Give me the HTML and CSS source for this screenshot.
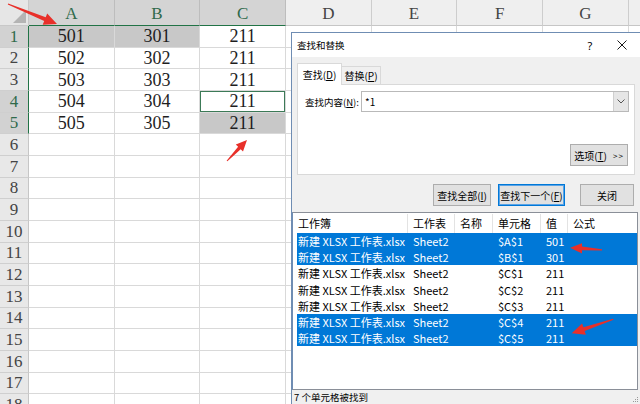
FILE: index.html
```html
<!DOCTYPE html>
<html lang="zh">
<head>
<meta charset="utf-8">
<title>查找和替换</title>
<link rel="stylesheet" href="styles.css">
</head>
<body>
<div class="sheet">
  <div class="corner"></div><div class="ch sel">A</div><div class="ch sel">B</div><div class="ch sel">C</div><div class="ch">D</div><div class="ch">E</div><div class="ch">F</div><div class="ch">G</div><div class="ch"></div>
  <div class="rh sel g">1</div><div class="c hl">501</div><div class="c hl">301</div><div class="c">211</div><div class="c"></div><div class="c"></div><div class="c"></div><div class="c"></div><div class="c"></div>
  <div class="rh g">2</div><div class="c">502</div><div class="c">302</div><div class="c">211</div><div class="c"></div><div class="c"></div><div class="c"></div><div class="c"></div><div class="c"></div>
  <div class="rh g">3</div><div class="c">503</div><div class="c">303</div><div class="c">211</div><div class="c"></div><div class="c"></div><div class="c"></div><div class="c"></div><div class="c"></div>
  <div class="rh sel g">4</div><div class="c">504</div><div class="c">304</div><div class="c active">211</div><div class="c"></div><div class="c"></div><div class="c"></div><div class="c"></div><div class="c"></div>
  <div class="rh sel g">5</div><div class="c">505</div><div class="c">305</div><div class="c hl">211</div><div class="c"></div><div class="c"></div><div class="c"></div><div class="c"></div><div class="c"></div>
  <div class="rh">6</div><div class="c"></div><div class="c"></div><div class="c"></div><div class="c"></div><div class="c"></div><div class="c"></div><div class="c"></div><div class="c"></div>
  <div class="rh">7</div><div class="c"></div><div class="c"></div><div class="c"></div><div class="c"></div><div class="c"></div><div class="c"></div><div class="c"></div><div class="c"></div>
  <div class="rh">8</div><div class="c"></div><div class="c"></div><div class="c"></div><div class="c"></div><div class="c"></div><div class="c"></div><div class="c"></div><div class="c"></div>
  <div class="rh">9</div><div class="c"></div><div class="c"></div><div class="c"></div><div class="c"></div><div class="c"></div><div class="c"></div><div class="c"></div><div class="c"></div>
  <div class="rh">10</div><div class="c"></div><div class="c"></div><div class="c"></div><div class="c"></div><div class="c"></div><div class="c"></div><div class="c"></div><div class="c"></div>
  <div class="rh">11</div><div class="c"></div><div class="c"></div><div class="c"></div><div class="c"></div><div class="c"></div><div class="c"></div><div class="c"></div><div class="c"></div>
  <div class="rh">12</div><div class="c"></div><div class="c"></div><div class="c"></div><div class="c"></div><div class="c"></div><div class="c"></div><div class="c"></div><div class="c"></div>
  <div class="rh">13</div><div class="c"></div><div class="c"></div><div class="c"></div><div class="c"></div><div class="c"></div><div class="c"></div><div class="c"></div><div class="c"></div>
  <div class="rh">14</div><div class="c"></div><div class="c"></div><div class="c"></div><div class="c"></div><div class="c"></div><div class="c"></div><div class="c"></div><div class="c"></div>
  <div class="rh">15</div><div class="c"></div><div class="c"></div><div class="c"></div><div class="c"></div><div class="c"></div><div class="c"></div><div class="c"></div><div class="c"></div>
  <div class="rh">16</div><div class="c"></div><div class="c"></div><div class="c"></div><div class="c"></div><div class="c"></div><div class="c"></div><div class="c"></div><div class="c"></div>
  <div class="rh">17</div><div class="c"></div><div class="c"></div><div class="c"></div><div class="c"></div><div class="c"></div><div class="c"></div><div class="c"></div><div class="c"></div>
  <div class="rh">18</div><div class="c"></div><div class="c"></div><div class="c"></div><div class="c"></div><div class="c"></div><div class="c"></div><div class="c"></div><div class="c"></div>
</div>

<div class="dialog">
  <div class="titlebar">
    <span class="title">查找和替换</span>
    <span class="tb-btn help">?</span>
    <span class="tb-btn close"><svg width="10" height="10" viewBox="0 0 10 10"><path d="M0.5 0.5L9.5 9.5M9.5 0.5L0.5 9.5" stroke="#1a1a1a" stroke-width="1" fill="none"/></svg></span>
  </div>
  <div class="tabs">
    <div class="tab active">查找(<u>D</u>)</div>
    <div class="tab">替换(<u>P</u>)</div>
  </div>
  <div class="panel">
    <div class="findrow">
      <span class="label">查找内容(<u>N</u>):</span>
      <div class="input">
        <span class="value">*1</span>
        <span class="drop"><svg width="8" height="5" viewBox="0 0 8 5"><path d="M0.5 0.5L4 4L7.5 0.5" stroke="#555" stroke-width="1" fill="none"/></svg></span>
      </div>
    </div>
    <div class="optrow">
      <div class="btn opt">选项(<u>T</u>)<span class="gt">&gt;&gt;</span></div>
    </div>
  </div>
  <div class="btnrow">
    <div class="btn w58">查找全部(<u>I</u>)</div>
    <div class="btn w67 focus">查找下一个(<u>F</u>)</div>
    <div class="btn w54">关闭</div>
  </div>
  <div class="list">
    <div class="lhead">
      <span>工作簿</span><span>工作表</span><span>名称</span><span>单元格</span><span>值</span><span class="last">公式</span>
    </div>
    <div class="lrow sel"><span>新建 XLSX 工作表.xlsx</span><span>Sheet2</span><span></span><span>$A$1</span><span>501</span><span></span></div>
    <div class="lrow sel"><span>新建 XLSX 工作表.xlsx</span><span>Sheet2</span><span></span><span>$B$1</span><span>301</span><span></span></div>
    <div class="lrow"><span>新建 XLSX 工作表.xlsx</span><span>Sheet2</span><span></span><span>$C$1</span><span>211</span><span></span></div>
    <div class="lrow"><span>新建 XLSX 工作表.xlsx</span><span>Sheet2</span><span></span><span>$C$2</span><span>211</span><span></span></div>
    <div class="lrow"><span>新建 XLSX 工作表.xlsx</span><span>Sheet2</span><span></span><span>$C$3</span><span>211</span><span></span></div>
    <div class="lrow sel"><span>新建 XLSX 工作表.xlsx</span><span>Sheet2</span><span></span><span>$C$4</span><span>211</span><span></span></div>
    <div class="lrow sel"><span>新建 XLSX 工作表.xlsx</span><span>Sheet2</span><span></span><span>$C$5</span><span>211</span><span></span></div>
  </div>
  <div class="status">
    <span>7 个单元格被找到</span>
    <svg class="grip" width="6" height="6" viewBox="0 0 6 6"><rect x="4" y="0" width="1" height="1" fill="#999"/><rect x="2" y="2" width="1" height="1" fill="#999"/><rect x="4" y="2" width="1" height="1" fill="#999"/><rect x="0" y="4" width="1" height="1" fill="#999"/><rect x="2" y="4" width="1" height="1" fill="#999"/><rect x="4" y="4" width="1" height="1" fill="#999"/></svg>
  </div>
</div>

<svg class="arrows" width="640" height="404" viewBox="0 0 640 404">
  <polygon points="8.2,3.5 45.7,17.2 47.2,13.5 57,24 42.7,24.7 44.2,20.9 7.8,4.5"/>
  <polygon points="226.6,160.7 238.1,146.8 235.8,144.5 247,140 243,151.4 240.7,149.2 227.4,161.3"/>
  <polygon points="602,249.3 582,246.6 582,243.2 570,247.8 582,253.4 582,250.2 602,250.6"/>
  <polygon points="613.1,318.8 583.4,327.3 582.1,323.5 571.7,333.3 585.9,334.8 584.6,331 613.5,319.8"/>
</svg>
</body>
</html>
```

FILE: styles.css
```css
* { box-sizing: border-box; margin: 0; padding: 0; }
html, body { width: 640px; height: 404px; overflow: hidden; background: #fff; }
body { position: relative; font-family: "Liberation Serif", serif; }

/* ---------- spreadsheet ---------- */
.sheet {
  display: grid;
  grid-template-columns: 29px repeat(8, 85.67px);
  grid-template-rows: 26px;
  grid-auto-rows: 21.67px;
  width: max-content;
}
.sheet > div {
  border-right: 1px solid #d9d9d9;
  border-bottom: 1px solid #d9d9d9;
  display: flex;
  align-items: center;
  justify-content: center;
  font-size: 18px;
  line-height: 1;
  color: #1e1e1e;
}
.sheet > .corner { background: #e6e6e6; position: relative; border-color: #c8c8c8; }
.corner::after {
  content: "";
  position: absolute;
  right: 2px; bottom: 2px;
  width: 13px; height: 13px;
  background: #b4b4b4;
  clip-path: polygon(100% 0, 100% 100%, 0 100%);
}
.sheet > .ch {
  background: #efefef;
  color: #444;
  font-size: 17px;
  padding-top: 2px;
  border-right-color: #cdcdcd;
  border-bottom-color: #c6c6c6;
}
.sheet > .ch.sel { background: #d4d4d4; color: #2f6a4b; border-bottom: 1px solid #217346; border-right-color: #bdbdbd; }
.sheet > .rh {
  background: #e8e8e8;
  color: #444;
  font-size: 17px;
  border-right-color: #c6c6c6;
  border-bottom-color: #cfcfcf;
}
.sheet > .rh.sel { background: #d2d2d2; color: #2f6a4b; }
.sheet > .rh.g { border-right: 1px solid #217346; }
.sheet > .c.hl { background: #c8c8c8; }
.sheet > .c.active { box-shadow: inset 0 0 0 1px #3c7a57; }

/* ---------- dialog ---------- */
.dialog {
  position: absolute;
  left: 291px; top: 32px;
  width: 350px; height: 380px;
  background: #f0f0f0;
  border-left: 1px solid #6f8db3;
  border-top: 1px solid #6f8db3;
  display: flex;
  flex-direction: column;
  font-family: "Noto Sans CJK SC", "Microsoft YaHei", sans-serif;
  color: #000;
  z-index: 2;
}
.titlebar {
  height: 24px;
  background: #fff;
  display: flex;
  align-items: center;
  padding: 0 3px 0 5px;
  flex: none;
}
.title { font-size: 9.5px; flex: 1; }
.tb-btn { width: 32px; height: 24px; display: flex; align-items: center; justify-content: center; }
.help { font-size: 11px; font-family: "Noto Sans", sans-serif; }

.tabs {
  display: flex;
  align-items: flex-end;
  height: 21px;
  margin: 6px 0 0 5px;
  position: relative;
  z-index: 1;
  flex: none;
}
.tab {
  font-size: 10px;
  height: 18px;
  width: 39px;
  display: flex;
  align-items: center;
  justify-content: center;
  background: #f0f0f0;
  border: 1px solid #d9d9d9;
  border-bottom: none;
  border-left: none;
  white-space: nowrap;
}
.tab.active {
  width: 45px;
  height: 22px;
  margin-bottom: -1px;
  background: #fff;
  border-left: 1px solid #d9d9d9;
}

.panel {
  margin: 0 6px 0 5px;
  height: 91px;
  background: #fff;
  border: 1px solid #d9d9d9;
  padding: 6px 5px 0 7px;
  flex: none;
}
.findrow { display: flex; align-items: center; height: 21px; }
.label { width: 56px; flex: none; font-size: 9.5px; white-space: nowrap; }
.input {
  width: 268px;
  height: 21px;
  flex: none;
  border: 1px solid #b9b9b9;
  display: flex;
  align-items: stretch;
}
.value { flex: 1; font-size: 10px; padding-left: 3px; display: flex; align-items: center; }
.drop {
  width: 15px;
  background: #e6e6e6;
  border-left: 1px solid #cfcfcf;
  display: flex;
  align-items: center;
  justify-content: center;
}
.optrow { display: flex; justify-content: flex-end; margin-top: 32px; padding-right: 1px; }

.btn {
  height: 22px;
  background: #e1e1e1;
  border: 1px solid #adadad;
  font-size: 10px;
  display: flex;
  align-items: center;
  justify-content: center;
  white-space: nowrap;
}
.btn.opt { width: 58px; }
.gt { margin-left: 6px; font-size: 8px; letter-spacing: 1px; }
.btnrow {
  display: flex;
  justify-content: flex-end;
  margin-top: 9px;
  padding-right: 7px;
  flex: none;
}
.w58 { width: 58px; }
.w67 { width: 67px; margin-left: 7px; }
.w54 { width: 54px; margin-left: 15px; }
.btn.focus { border: 1px solid #0078d7; box-shadow: inset 0 0 0 1px #5aa3e6; }

.list {
  margin-top: 6px;
  width: 346px;
  height: 178px;
  background: #fff;
  border: 1px solid #8a8f98;
  border-left-color: #6f8db3;
  font-size: 11px;
  flex: none;
}
.lhead, .lrow {
  display: grid;
  grid-template-columns: 111px 47px 38px 48px 27px 1fr;
  margin-left: 4px;
  align-items: center;
  white-space: nowrap;
}
.lhead { height: 20px; }
.lhead span {
  height: 19px;
  display: flex;
  align-items: center;
  padding-left: 5px;
  border-right: 1px solid #e3e3e3;
}
.lhead span:first-child { padding-left: 1px; }
.lhead span.last { border-right: none; }
.lrow { height: 16.2px; }
.lrow span { padding-left: 5px; line-height: 16px; overflow: hidden; }
.lrow span:first-child { padding-left: 1px; }
.lrow.sel { background: #0078d7; color: #fff; }

.status {
  flex: 1;
  display: flex;
  align-items: flex-start;
  justify-content: space-between;
  padding: 1px 0 0 2px;
  font-size: 9.5px;
  line-height: 13px;
}
.grip { margin-top: 6px; margin-right: 2px; }

/* ---------- annotation arrows ---------- */
.arrows { position: absolute; left: 0; top: 0; z-index: 5; fill: #e8302a; }
```
